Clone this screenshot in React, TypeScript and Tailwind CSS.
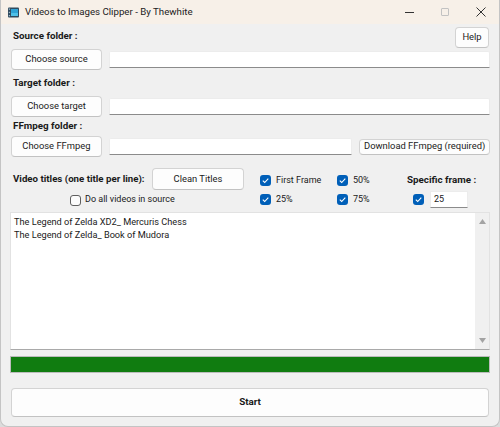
function Check({ checked = true }: { checked?: boolean }) {
  return checked ? (
    <span className="w-[11px] h-[11px] rounded-[3px] bg-[#005fb8] flex items-center justify-center shrink-0">
      <svg width="9" height="9" viewBox="0 0 9 9">
        <path d="M1.8 4.7 L3.7 6.5 L7.3 2.6" fill="none" stroke="white" strokeWidth="1.1" />
      </svg>
    </span>
  ) : (
    <span className="w-[11px] h-[11px] rounded-[3px] border border-[#5f5f5f] bg-[#fbfbfb] shrink-0" />
  );
}

function Btn({ children, className = "" }: { children: React.ReactNode; className?: string }) {
  return (
    <div
      className={
        "flex items-center justify-center whitespace-nowrap rounded-[4px] border border-[#d3d3d3] border-b-[#c2c2c2] bg-[#fdfdfd] text-[9.4px] " +
        className
      }
    >
      {children}
    </div>
  );
}

function Field({ className = "" }: { className?: string }) {
  return <div className={"bg-white border border-[#ececec] border-b-[#8b8b8b] rounded-t-[2px] " + className} />;
}

export default function App() {
  return (
    <div className="w-[500px] h-[427px] bg-[#dcdcdc] font-['Roboto','Noto_Sans',sans-serif] text-[9px] text-[#1a1a1a] whitespace-nowrap">
      <div className="w-full h-full flex flex-col bg-[#f0f0f0] rounded-b-[8px] border-x border-b border-[#c4c4c4] overflow-hidden">
        {/* title bar */}
        <div className="h-[24px] shrink-0 flex items-center bg-[#f7f0e8]">
          <svg className="ml-[7px]" width="11" height="11" viewBox="0 0 11 11">
            <rect x="0" y="0.5" width="11" height="10" rx="1" fill="#2f4a5e" />
            <rect x="3" y="2" width="7" height="7" fill="#2fa3d6" />
            <rect x="3" y="6" width="7" height="3" fill="#4fc1e8" />
            <rect x="0.8" y="1.5" width="1.3" height="1.3" fill="#9fb6c6" />
            <rect x="0.8" y="4.8" width="1.3" height="1.3" fill="#9fb6c6" />
            <rect x="0.8" y="8" width="1.3" height="1.3" fill="#9fb6c6" />
          </svg>
          <span className="ml-[6px] text-[9.7px] text-[#1b1b1b]">Videos to Images Clipper - By Thewhite</span>
          <div className="ml-auto flex h-full">
            <div className="w-[36px] h-full flex items-center justify-center">
              <span className="block w-[9px] h-px bg-[#333]" />
            </div>
            <div className="w-[36px] h-full flex items-center justify-center">
              <span className="block w-[8px] h-[8px] border border-[#c2c2c2] rounded-[1px]" />
            </div>
            <div className="w-[36px] h-full flex items-center justify-center">
              <svg width="10" height="10" viewBox="0 0 10 10">
                <path d="M0.5 0.5 L9.5 9.5 M9.5 0.5 L0.5 9.5" stroke="#333" strokeWidth="1" />
              </svg>
            </div>
          </div>
        </div>

        {/* body */}
        <div className="flex-1 flex flex-col px-[9px]">
          <div className="h-[25px] flex items-center justify-between">
            <span className="pl-[3px] font-bold text-[9.8px]">Source folder :</span>
            <Btn className="w-[34px] h-[21px] mr-[1px] mt-[1px]">Help</Btn>
          </div>
          <div className="h-[21px] flex items-center">
            <Btn className="w-[91px] h-[21px] ml-[1px]">Choose source</Btn>
            <Field className="flex-1 h-[17px] ml-[7px]" />
          </div>

          <div className="h-[26px] flex items-center">
            <span className="pl-[3px] font-bold text-[9.8px]">Target folder :</span>
          </div>
          <div className="h-[21px] flex items-center">
            <Btn className="w-[91px] h-[21px] ml-[1px]">Choose target</Btn>
            <Field className="flex-1 h-[17px] ml-[7px]" />
          </div>

          <div className="h-[19px] flex items-center">
            <span className="pl-[3px] font-bold text-[9.8px]">FFmpeg folder :</span>
          </div>
          <div className="h-[21px] flex items-center">
            <Btn className="w-[91px] h-[21px] ml-[1px]">Choose FFmpeg</Btn>
            <Field className="w-[244px] h-[17px] ml-[7px]" />
            <Btn className="w-[131px] h-[16px] ml-[7px] rounded-[3px]">Download FFmpeg (required)</Btn>
          </div>

          {/* titles options */}
          <div className="h-[55px] flex">
            <div className="w-[234px] flex flex-col pt-[11px]">
              <div className="h-[22px] flex items-center justify-between">
                <span className="pl-[3px] font-bold text-[9.7px]">Video titles (one title per line):</span>
                <Btn className="w-[92px] h-[22px] border-[#1e5a96] border-b-[#1e5a96] text-[9.2px]">Clean Titles</Btn>
              </div>
              <div className="mt-[5px] h-[10px] flex items-center gap-[4px] pl-[60px]">
                <Check checked={false} />
                <span>Do all videos in source</span>
              </div>
            </div>
            <div className="ml-[16px] w-[77px] flex flex-col pt-[14px]">
              <div className="h-[19px] flex items-center gap-[5px]">
                <Check />
                <span>First Frame</span>
              </div>
              <div className="h-[19px] flex items-center gap-[5px]">
                <Check />
                <span>25%</span>
              </div>
            </div>
            <div className="w-[70px] flex flex-col pt-[14px]">
              <div className="h-[19px] flex items-center gap-[5px]">
                <Check />
                <span>50%</span>
              </div>
              <div className="h-[19px] flex items-center gap-[5px]">
                <Check />
                <span>75%</span>
              </div>
            </div>
            <div className="flex flex-col pt-[14px]">
              <div className="h-[19px] flex items-center">
                <span className="font-bold text-[9.8px]">Specific frame :</span>
              </div>
              <div className="h-[19px] flex items-center pl-[6px]">
                <Check />
                <div className="ml-[6px] w-[38px] h-[17px] bg-white border border-[#ececec] border-b-[#8b8b8b] flex items-center pl-[3px]">
                  25
                </div>
              </div>
            </div>
          </div>

          {/* titles list */}
          <div className="h-[138px] flex bg-white border border-[#e2e2e2] border-b-[#a9a9a9]">
            <div className="flex-1 px-[3px] pt-[2px] leading-[13px] text-[9.2px]">
              <div>The Legend of Zelda XD2_ Mercuris Chess</div>
              <div>The Legend of Zelda_ Book of Mudora</div>
            </div>
            <div className="w-[14px] bg-[#f0f0f0] flex flex-col items-center justify-between py-[6px]">
              <svg width="7" height="5" viewBox="0 0 7 5">
                <path d="M3.5 0 L7 5 L0 5 Z" fill="#a3a3a3" />
              </svg>
              <svg width="7" height="5" viewBox="0 0 7 5">
                <path d="M0 0 L7 0 L3.5 5 Z" fill="#a3a3a3" />
              </svg>
            </div>
          </div>

          {/* progress */}
          <div className="mt-[6px] h-[17px] border border-[#bcbcbc] bg-[#e6e6e6]">
            <div className="h-full w-full bg-[#107c10]" />
          </div>

          <Btn className="mt-[15px] mx-[1px] h-[29px] font-bold text-[9.8px]">Start</Btn>
        </div>
      </div>
    </div>
  );
}
